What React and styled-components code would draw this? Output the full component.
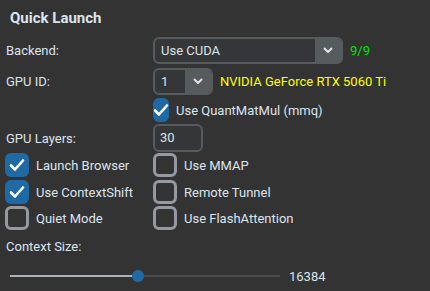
import styled, { createGlobalStyle } from "styled-components";

const Global = createGlobalStyle`
  body {
    margin: 0;
    background: #333333;
    font-family: Roboto, "Liberation Sans", sans-serif;
    color: #dce4ee;
  }
`;

const Panel = styled.div`
  width: 430px;
  height: 291px;
  padding: 0 5px;
  box-sizing: border-box;
  display: flex;
  flex-direction: column;
`;

const Title = styled.h2`
  margin: 0;
  padding: 9px 0 0 5px;
  height: 37px;
  box-sizing: border-box;
  font-size: 15px;
  font-weight: 700;
  line-height: 18px;
`;

const Row = styled.div`
  display: flex;
  align-items: center;
  height: ${(p) => p.h || 27}px;
  margin-bottom: ${(p) => p.mb || 0}px;
  font-size: 13px;
`;

const Label = styled.div`
  width: 147px;
  padding-left: 1px;
  flex-shrink: 0;
`;

const Select = styled.div`
  width: ${(p) => p.w}px;
  height: 27px;
  box-sizing: border-box;
  border: 2px solid #565b5e;
  border-radius: 6px;
  background: #343638;
  display: flex;
  overflow: hidden;
`;

const SelectText = styled.div`
  flex: 1;
  padding-left: 6px;
  line-height: 23px;
`;

const SelectButton = styled.div`
  width: 26px;
  background: #565b5e;
  display: flex;
  align-items: center;
  justify-content: center;
`;

const Note = styled.span`
  margin-left: ${(p) => p.ml || 7}px;
  color: ${(p) => p.color};
`;

const Entry = styled.div`
  width: 50px;
  height: 28px;
  box-sizing: border-box;
  border: 2px solid #565b5e;
  border-radius: 6px;
  background: #343638;
  padding-left: 5px;
  line-height: 24px;
`;

const Check = styled.div`
  display: flex;
  align-items: center;
  gap: 7px;
  width: 148px;
  flex-shrink: 0;
  white-space: nowrap;
`;

const Box = styled.div`
  width: 24px;
  height: 24px;
  box-sizing: border-box;
  border-radius: 6px;
  border: ${(p) => (p.on ? "none" : "3px solid #949a9f")};
  background: ${(p) => (p.on ? "#1f6aa5" : "transparent")};
  display: flex;
  align-items: center;
  justify-content: center;
`;

const SliderRow = styled.div`
  display: flex;
  align-items: center;
  height: 22px;
  margin-top: 9px;
  font-size: 13px;
`;

const Track = styled.div`
  position: relative;
  margin-left: 5px;
  width: 270px;
  height: 2px;
  background: #4a4d50;
`;

const Fill = styled.div`
  height: 100%;
  background: #aab0b5;
`;

const Knob = styled.div`
  position: absolute;
  top: -5px;
  width: 12px;
  height: 12px;
  margin-left: -6px;
  border-radius: 50%;
  background: #1f6aa5;
`;

const Chevron = () => (
  <svg width="10" height="7" viewBox="0 0 10 7">
    <polyline points="1.5,1.5 5,5 8.5,1.5" fill="none" stroke="#dce4ee" strokeWidth="2" strokeLinecap="round" strokeLinejoin="round" />
  </svg>
);

const Tick = () => (
  <svg width="16" height="14" viewBox="0 0 16 14">
    <polyline points="2,7.5 6,11.5 14,2.5" fill="none" stroke="#ffffff" strokeWidth="2.6" strokeLinecap="round" strokeLinejoin="round" />
  </svg>
);

function CheckItem({ on, children }) {
  return (
    <Check>
      <Box on={on}>{on && <Tick />}</Box>
      <span>{children}</span>
    </Check>
  );
}

export default function App() {
  const pct = (138 - 10) / 270;
  return (
    <>
      <Global />
      <Panel>
        <Title>Quick Launch</Title>
        <Row mb={4}>
          <Label>Backend:</Label>
          <Select w={190}>
            <SelectText>Use CUDA</SelectText>
            <SelectButton><Chevron /></SelectButton>
          </Select>
          <Note color="#00e000">9/9</Note>
        </Row>
        <Row mb={3}>
          <Label>GPU ID:</Label>
          <Select w={60}>
            <SelectText>1</SelectText>
            <SelectButton><Chevron /></SelectButton>
          </Select>
          <Note color="#ffff00">NVIDIA GeForce RTX 5060 Ti</Note>
        </Row>
        <Row h={24} mb={2}>
          <Label />
          <CheckItem on>Use QuantMatMul (mmq)</CheckItem>
        </Row>
        <Row h={28} mb={1}>
          <Label>GPU Layers:</Label>
          <Entry>30</Entry>
        </Row>
        <Row h={24} mb={3}>
          <CheckItem on>Launch Browser</CheckItem>
          <CheckItem>Use MMAP</CheckItem>
        </Row>
        <Row h={24} mb={2}>
          <CheckItem on>Use ContextShift</CheckItem>
          <CheckItem>Remote Tunnel</CheckItem>
        </Row>
        <Row h={24} mb={6}>
          <CheckItem>Quiet Mode</CheckItem>
          <CheckItem>Use FlashAttention</CheckItem>
        </Row>
        <Row h={20}>
          <Label>Context Size:</Label>
        </Row>
        <SliderRow>
          <Track>
            <Fill style={{ width: `${pct * 100}%` }} />
            <Knob style={{ left: `${pct * 100}%` }} />
          </Track>
          <Note ml={9}>16384</Note>
        </SliderRow>
      </Panel>
    </>
  );
}
